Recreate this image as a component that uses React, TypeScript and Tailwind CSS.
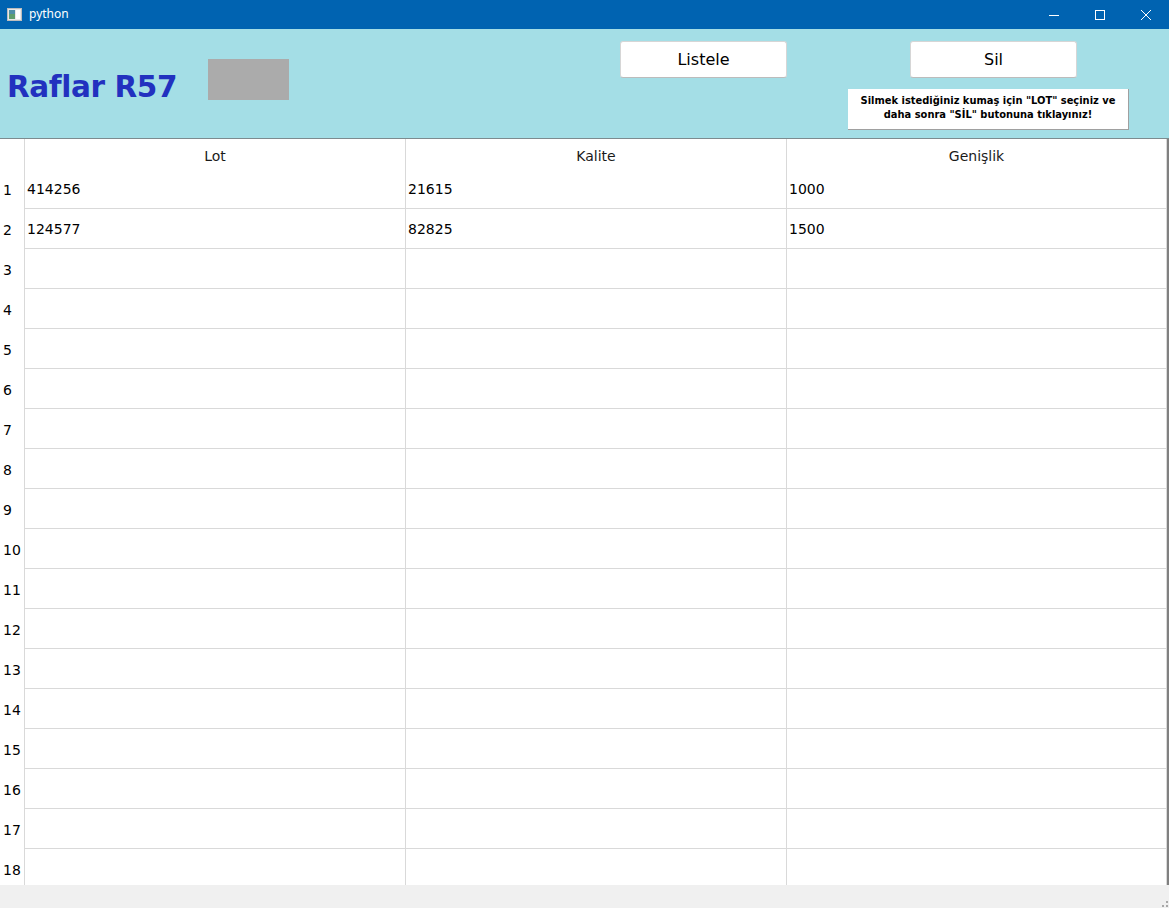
import React from "react";

const rows = [
  ["414256", "21615", "1000"],
  ["124577", "82825", "1500"],
];

function TitleBar() {
  return (
    <div className="h-[29px] bg-[#0063B1] flex items-center text-white select-none">
      <div className="w-[29px] flex items-center justify-center">
        <svg width="15" height="13" viewBox="0 0 15 13">
          <rect x="0.5" y="0.5" width="14" height="12" fill="#e8e8e8" stroke="#bdbdbd" />
          <rect x="2" y="2" width="6" height="9" fill="#4f8fa8" />
          <rect x="2" y="6" width="6" height="5" fill="#5e9e6e" />
          <rect x="9" y="2" width="4" height="9" fill="#ffffff" />
        </svg>
      </div>
      <span className="text-[12px] font-['Noto_Sans','Open_Sans',sans-serif] leading-none pb-[1px]">python</span>
      <div className="ml-auto flex h-full">
        <div className="w-[46px] flex items-center justify-center">
          <svg width="10" height="10" viewBox="0 0 10 10">
            <path d="M0 5.5H10" stroke="#fff" strokeWidth="1" />
          </svg>
        </div>
        <div className="w-[46px] flex items-center justify-center">
          <svg width="10" height="10" viewBox="0 0 10 10">
            <rect x="0.5" y="0.5" width="9" height="9" fill="none" stroke="#fff" strokeWidth="1" />
          </svg>
        </div>
        <div className="w-[46px] flex items-center justify-center">
          <svg width="10" height="10" viewBox="0 0 10 10">
            <path d="M0 0L10 10M10 0L0 10" stroke="#fff" strokeWidth="1" />
          </svg>
        </div>
      </div>
    </div>
  );
}

function Header() {
  return (
    <div className="h-[110px] bg-[#A4DEE6] border-b border-[#7d8b8f] flex items-start">
      <div className="w-[208px] pl-[7px] pt-[41px]">
        <div className="text-[29.5px] leading-[35px] font-bold text-[#2231BF] font-['DejaVu_Sans',Verdana,sans-serif] tracking-[-0.4px] whitespace-nowrap">
          Raflar R57
        </div>
      </div>
      <div className="mt-[30px] w-[81px] h-[41px] bg-[#ABABAB]" />
      <div className="ml-[331px] mt-[12px] w-[167px] h-[37px] bg-white rounded-[3px] border border-[#d6d6d6] border-b-[#bcbcbc] flex items-center justify-center pt-[1px] text-[16px] font-['DejaVu_Sans',sans-serif] text-black">
        Listele
      </div>
      <div className="ml-[61px] flex flex-col">
        <div className="ml-[62px] mt-[12px] w-[167px] h-[37px] bg-white rounded-[3px] border border-[#d6d6d6] border-b-[#bcbcbc] flex items-center justify-center pt-[1px] text-[16px] font-['DejaVu_Sans',sans-serif] text-black">
          Sil
        </div>
        <div className="mt-[11px] w-[281px] h-[41px] bg-white border-r border-b border-[#a0a0a0] flex items-center justify-center text-center text-[11px] leading-[14px] font-bold font-['DejaVu_Sans_Condensed','DejaVu_Sans',sans-serif] text-black pb-[2px]">
          <div>
            Silmek istediğiniz kumaş için "LOT" seçiniz ve
            <br />
            daha sonra "SİL" butonuna tıklayınız!
          </div>
        </div>
      </div>
    </div>
  );
}

function Table() {
  const all = Array.from({ length: 18 }, (_, i) => rows[i] ?? ["", "", ""]);
  return (
    <div className="h-[746px] overflow-hidden bg-white border-r-2 border-[#808080] font-['DejaVu_Sans',sans-serif] text-[14px] text-black">
      <div className="flex h-[30px]">
        <div className="w-[25px] border-r border-[#d9d9d9]" />
        {["Lot", "Kalite", "Genişlik"].map((h, i) => (
          <div
            key={h}
            className={
              i === 2
                ? "flex-1 border-r border-[#d9d9d9] flex items-center justify-center pt-[4px] text-[#1a1a1a]"
                : "w-[381px] border-r border-[#d9d9d9] flex items-center justify-center pt-[4px] text-[#1a1a1a]"
            }
          >
            {h}
          </div>
        ))}
      </div>
      {all.map((r, idx) => (
        <div key={idx} className="flex h-[40px]">
          <div className="w-[25px] border-r border-[#d9d9d9] flex items-center pl-[3px] pt-[2px]">
            {idx + 1}
          </div>
          <div className="w-[381px] border-r border-b border-[#d9d9d9] flex items-center pl-[2px] pt-[2px]">
            {r[0]}
          </div>
          <div className="w-[381px] border-r border-b border-[#d9d9d9] flex items-center pl-[2px] pt-[2px]">
            {r[1]}
          </div>
          <div className="flex-1 border-r border-b border-[#d9d9d9] flex items-center pl-[2px] pt-[2px]">
            {r[2]}
          </div>
        </div>
      ))}
    </div>
  );
}

export default function App() {
  return (
    <div className="w-[1169px] h-[908px] overflow-hidden bg-[#F0F0F0] flex flex-col">
      <TitleBar />
      <Header />
      <Table />
      <div className="flex-1 bg-[#F0F0F0] relative">
        <svg className="absolute right-[1px] bottom-[1px]" width="6" height="6" viewBox="0 0 6 6">
          <rect x="4" y="0" width="2" height="2" fill="#a8a8a8" />
          <rect x="0" y="4" width="2" height="2" fill="#a8a8a8" />
          <rect x="4" y="4" width="2" height="2" fill="#a8a8a8" />
        </svg>
      </div>
    </div>
  );
}
